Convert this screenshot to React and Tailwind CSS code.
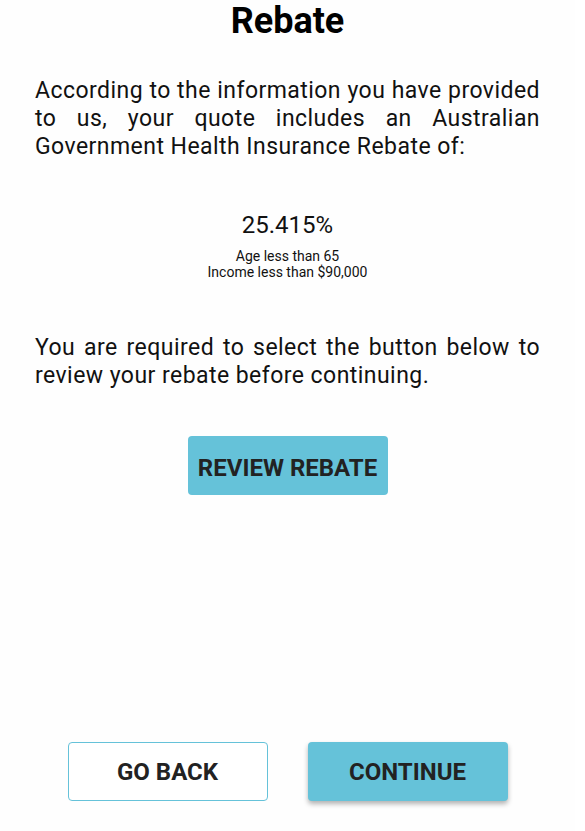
export default function App() {
  return (
    <div
      className="flex min-h-screen w-[575px] flex-col bg-[#fefefe] px-[35px] text-[#111]"
      style={{ fontFamily: 'Roboto, "Liberation Sans", sans-serif' }}
    >
      <h1 className="text-center text-[36px] font-bold leading-[42px] text-black">Rebate</h1>

      <p className="mt-[35px] text-justify text-[23px] leading-[28px] tracking-[0.45px]">
        According to the information you have provided to us, your quote includes an Australian
        Government Health Insurance Rebate of:
      </p>

      {/* rebate figure */}
      <div className="mt-[49px] text-center">
        <p className="text-[24px] leading-[30px]">25.415%</p>
        <p className="mt-[8px] text-[14px] leading-[16px]">Age less than 65</p>
        <p className="text-[14px] leading-[16px]">Income less than $90,000</p>
      </div>

      <p className="mt-[54px] text-justify text-[23px] leading-[28px] tracking-[0.45px]">
        You are required to select the button below to review your rebate before continuing.
      </p>

      <div className="mt-[46px] flex justify-center">
        <button className="h-[59px] w-[200px] rounded-[4px] bg-[#65c2d9] pt-[5px] text-[24px] font-bold text-[#222]">
          REVIEW REBATE
        </button>
      </div>

      <div className="mt-auto flex justify-center gap-[40px] pb-[30px]">
        <button className="h-[59px] w-[200px] rounded-[4px] border border-[#65c2d9] bg-white text-[24px] font-bold text-[#222]">
          GO BACK
        </button>
        <button className="h-[59px] w-[200px] rounded-[4px] bg-[#65c2d9] text-[24px] font-bold text-[#222] shadow-[0_3px_5px_rgba(0,0,0,0.3)]">
          CONTINUE
        </button>
      </div>
    </div>
  )
}
